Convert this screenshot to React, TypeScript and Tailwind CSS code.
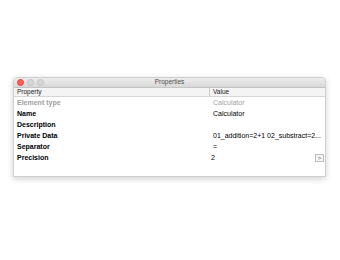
import React from "react";

const rows: { label: string; value: string; muted?: boolean; button?: boolean }[] = [
  { label: "Element type", value: "Calculator", muted: true },
  { label: "Name", value: "Calculator" },
  { label: "Description", value: "" },
  { label: "Private Data", value: "01_addition=2+1 02_substract=2..." },
  { label: "Separator", value: "=" },
  { label: "Precision", value: "2", button: true },
];

export default function App() {
  return (
    <div
      className="w-[340px] h-[260px] bg-white pt-[77px] pl-[13px]"
      style={{ fontFamily: '"Liberation Sans", Arial, sans-serif' }}
    >
      <div className="w-[313px] h-[100px] flex flex-col bg-white rounded-t-[4px] border border-[#cfcfcf] shadow-[0_2px_6px_rgba(0,0,0,0.18)] overflow-hidden">
        {/* Title bar */}
        <div className="relative h-[10px] flex items-center bg-gradient-to-b from-[#ececec] to-[#d8d8d8] border-b border-[#c4c4c4]">
          <div className="flex items-center pl-[3px]">
            <span className="w-[7px] h-[7px] rounded-full bg-[#fc5f57] border-[0.5px] border-[#e0443e]" />
            <span className="w-[7px] h-[7px] rounded-full bg-[#d6d6d6] border-[0.5px] border-[#c3c3c3] ml-[3px]" />
            <span className="w-[7px] h-[7px] rounded-full bg-[#d6d6d6] border-[0.5px] border-[#c3c3c3] ml-[3px]" />
          </div>
          <div className="absolute inset-0 flex items-center justify-center text-[6.5px] text-[#4d4d4d] leading-none">
            Properties
          </div>
        </div>
        {/* Header */}
        <div className="flex h-[9px] items-center bg-[#f4f4f4] border-b border-[#d6d6d6] text-[6.5px] leading-none text-[#222]">
          <div className="w-[195px] pl-[3px]">Property</div>
          <div className="flex-1 h-full flex items-center border-l border-[#cfcfcf] pl-[3px]">Value</div>
        </div>
        {/* Rows */}
        <div className="flex flex-col">
          {rows.map((r) => (
            <div key={r.label} className="flex h-[11px] items-center text-[7px] leading-none">
              <div
                className={
                  "w-[195px] pl-[3px] font-bold " + (r.muted ? "text-[#a0a0a0]" : "text-black")
                }
              >
                {r.label}
              </div>
              <div
                className={
                  "flex-1 flex items-center justify-between pr-[1px] " +
                  (r.button ? "pl-[2px] " : "pl-[4px] ") +
                  (r.muted ? "text-[#a0a0a0]" : "text-black")
                }
              >
                <span className="whitespace-nowrap">{r.value}</span>
                {r.button && (
                  <span className="w-[9px] h-[8px] flex items-center justify-center border border-[#bdbdbd] bg-[#f6f6f6] text-[6px] text-[#555]">
                    &gt;
                  </span>
                )}
              </div>
            </div>
          ))}
        </div>
      </div>
    </div>
  );
}
